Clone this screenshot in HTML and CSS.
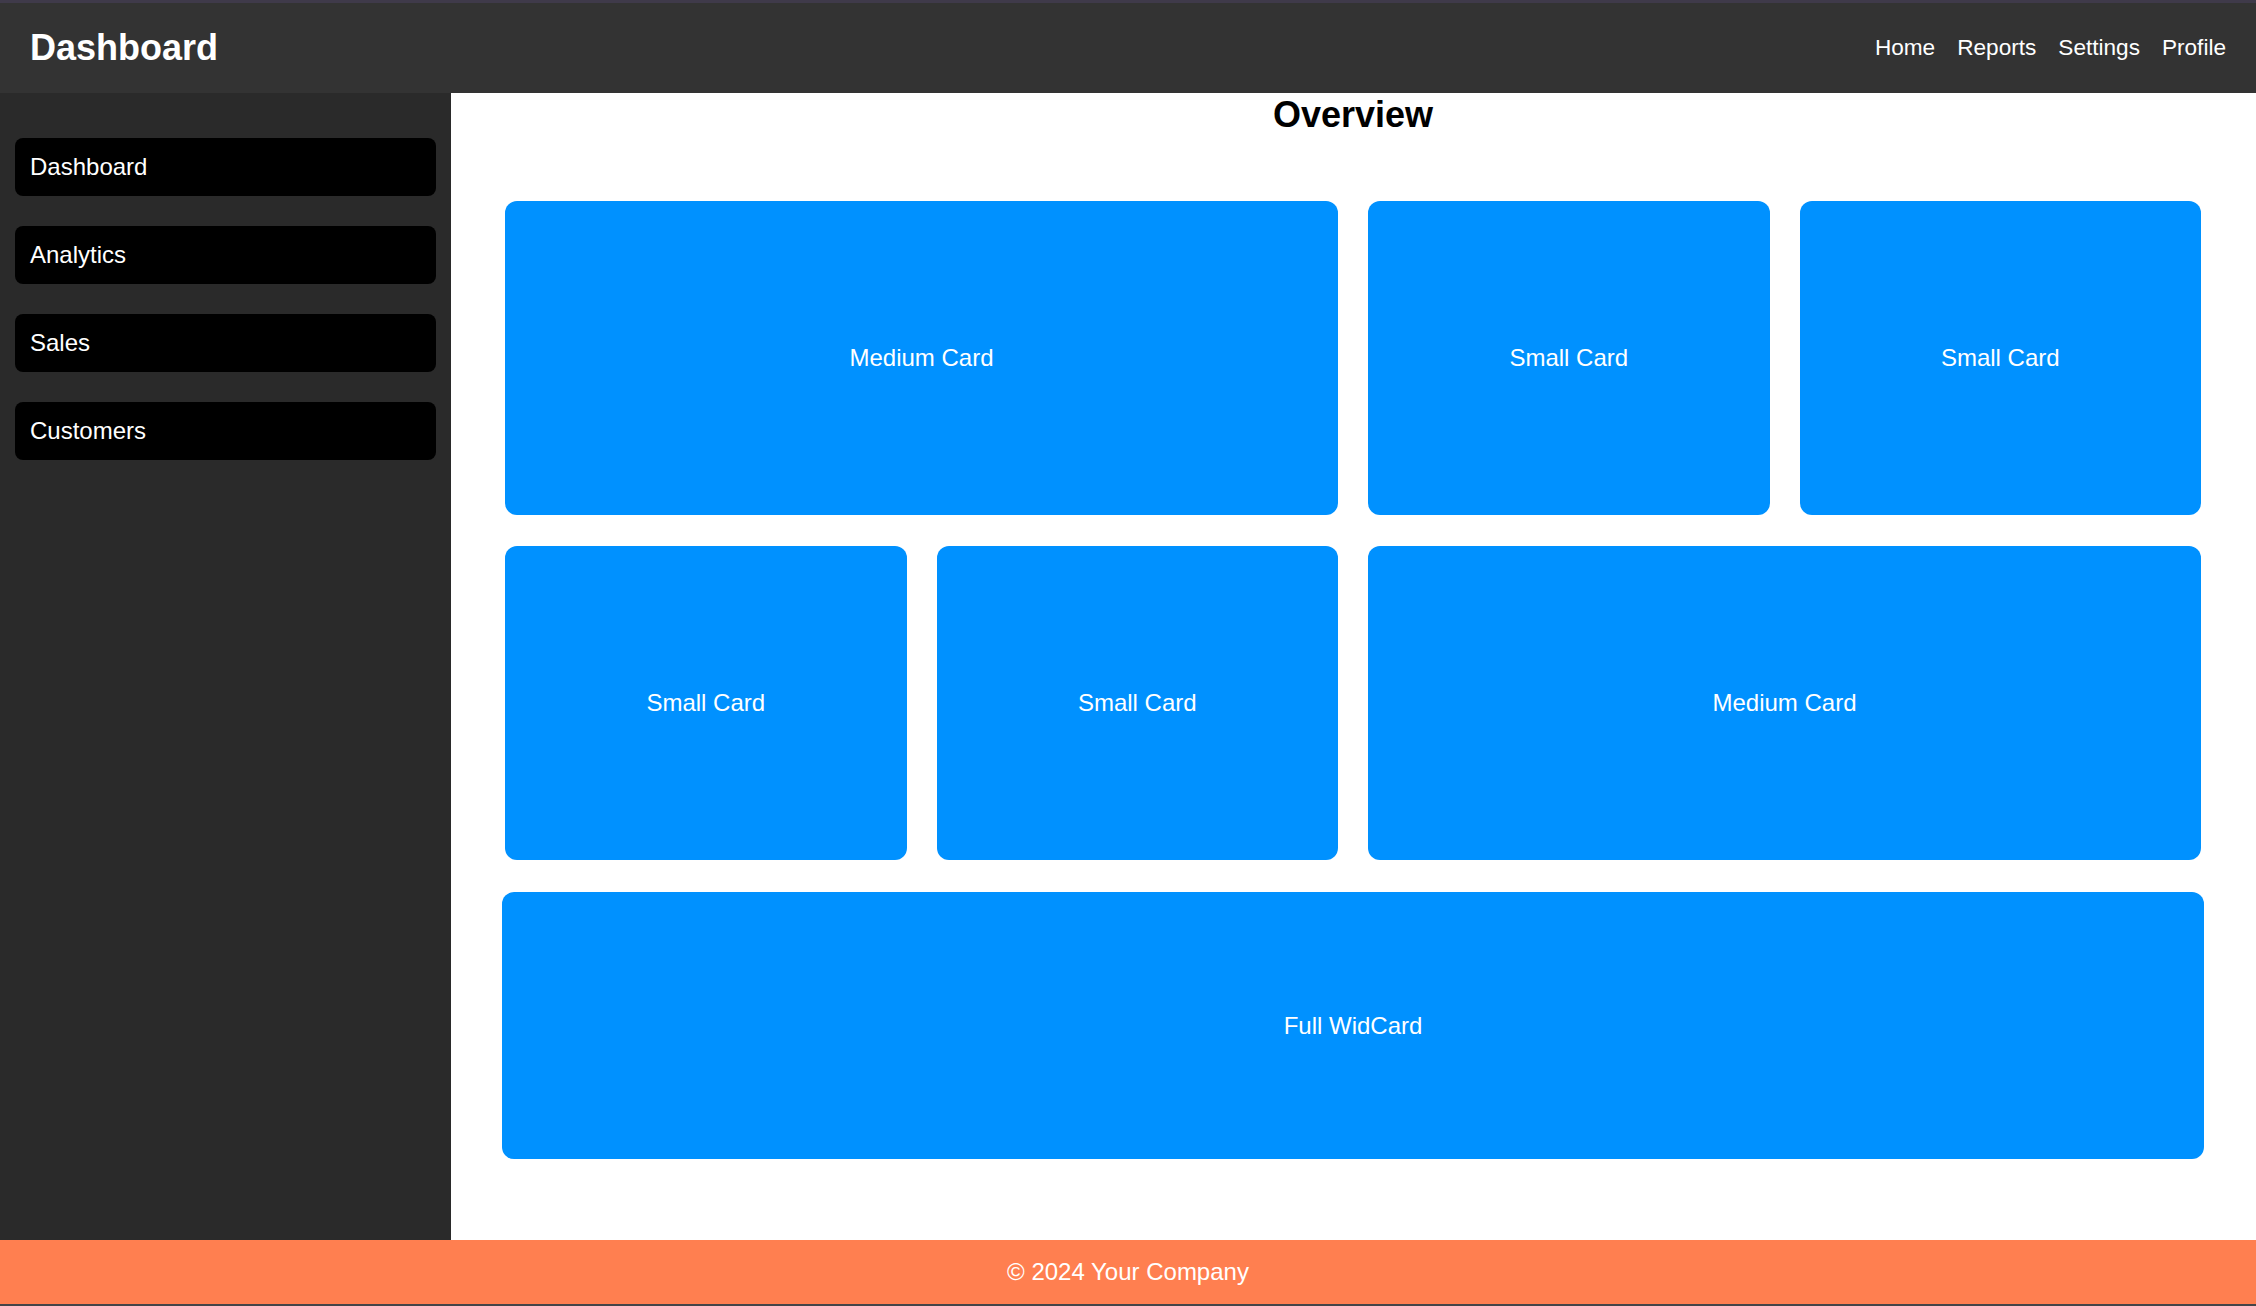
FILE: index.html
```html
<!DOCTYPE html>
<html lang="en">
<head>
<meta charset="utf-8">
<title>Dashboard</title>
<link rel="stylesheet" href="styles.css">
</head>
<body>
  <header class="topbar">
    <h1 class="brand">Dashboard</h1>
    <nav class="topnav">
      <a href="#">Home</a>
      <a href="#">Reports</a>
      <a href="#">Settings</a>
      <a href="#">Profile</a>
    </nav>
  </header>
  <div class="layout">
    <aside class="sidebar">
      <a class="side-item" href="#">Dashboard</a>
      <a class="side-item" href="#">Analytics</a>
      <a class="side-item" href="#">Sales</a>
      <a class="side-item" href="#">Customers</a>
    </aside>
    <main class="content">
      <h2 class="title">Overview</h2>
      <div class="grid">
        <div class="card medium">Medium Card</div>
        <div class="card">Small Card</div>
        <div class="card">Small Card</div>
        <div class="card">Small Card</div>
        <div class="card">Small Card</div>
        <div class="card medium">Medium Card</div>
      </div>
      <div class="card full">Full WidCard</div>
    </main>
  </div>
  <footer class="footer">© 2024 Your Company</footer>
</body>
</html>
```
FILE: styles.css
```css
html, body {
  margin: 0;
  padding: 0;
}
body {
  height: 100vh;
  box-sizing: border-box;
  display: flex;
  flex-direction: column;
  font-family: "Liberation Sans", Arial, sans-serif;
  border-top: 3px solid #3f3a4a;
  border-bottom: 2px solid #444448;
  background: #ffffff;
}
.topbar {
  flex: 0 0 90px;
  background: #333333;
  display: flex;
  align-items: center;
  justify-content: space-between;
  padding: 0 30px;
}
.brand {
  margin: 0;
  color: #ffffff;
  font-size: 36px;
  font-weight: bold;
}
.topnav {
  display: flex;
  gap: 22px;
}
.topnav a {
  color: #ffffff;
  text-decoration: none;
  font-size: 22.6px;
}
.layout {
  flex: 1;
  display: flex;
  min-height: 0;
}
.sidebar {
  flex: 0 0 451px;
  box-sizing: border-box;
  background: #2a2a2a;
  padding: 45px 15px;
  display: flex;
  flex-direction: column;
  gap: 30px;
}
.side-item {
  height: 58px;
  background: #000000;
  border-radius: 8px;
  color: #ffffff;
  text-decoration: none;
  font-size: 24px;
  display: flex;
  align-items: center;
  padding-left: 15px;
}
.content {
  flex: 1;
  background: #ffffff;
  padding: 0 52px 0 51px;
}
.title {
  margin: 0;
  padding-top: 1px;
  text-align: center;
  font-size: 36px;
  font-weight: bold;
  color: #000000;
}
.grid {
  margin-top: 65px;
  padding: 0 3px;
  display: grid;
  grid-template-columns: repeat(4, 1fr);
  grid-auto-rows: 314px;
  column-gap: 30px;
  row-gap: 31px;
}
.card {
  background: #0091ff;
  border-radius: 12px;
  color: #ffffff;
  font-size: 24px;
  display: flex;
  align-items: center;
  justify-content: center;
}
.medium {
  grid-column: span 2;
}
.full {
  margin-top: 32px;
  height: 267px;
}
.footer {
  flex: 0 0 64px;
  background: #ff7f50;
  color: #ffffff;
  font-size: 24px;
  display: flex;
  align-items: center;
  justify-content: center;
}
```
